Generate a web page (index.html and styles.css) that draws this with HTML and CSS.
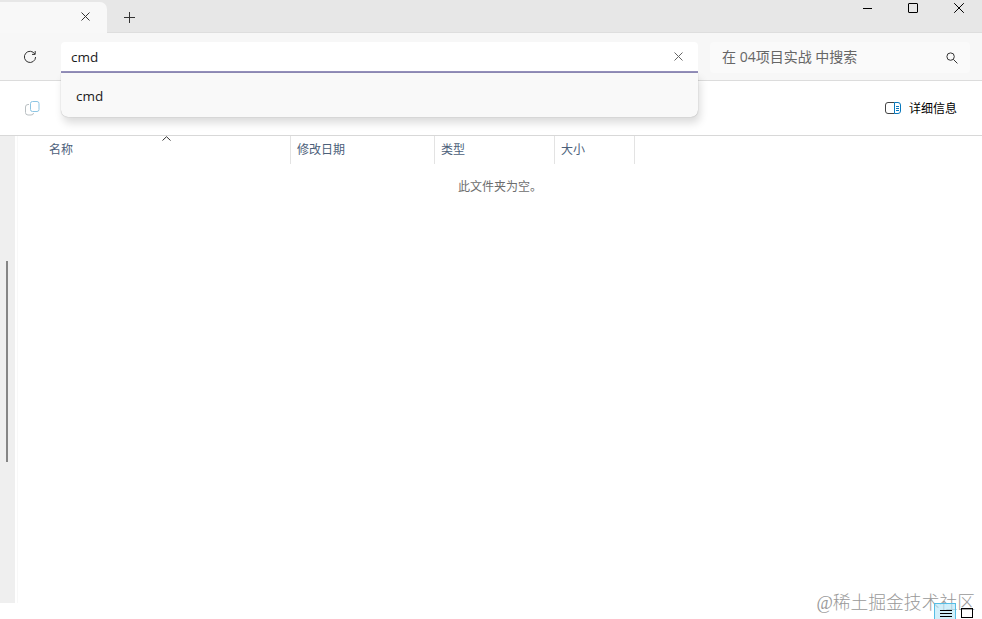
FILE: index.html
```html
<!DOCTYPE html>
<html lang="zh-CN">
<head>
    <meta charset="UTF-8">
    <meta name="viewport" content="width=device-width, initial-scale=1.0">
    <title>04项目实战</title>
    <link rel="stylesheet" href="styles.css">
</head>
<body>
    <div class="window">
        <header class="title-bar">
            <div class="tab">
                <svg class="tab-close" width="9" height="9" viewBox="0 0 9 9"><path d="M.5.5l8 8M8.5.5l-8 8"/></svg>
            </div>
            <svg class="new-tab" width="11" height="11" viewBox="0 0 11 11"><path d="M5.5 0v11M0 5.5h11"/></svg>
            <div class="window-controls">
                <svg width="10" height="10" viewBox="0 0 10 10"><path d="M1 5.5h9"/></svg>
                <svg width="10" height="10" viewBox="0 0 10 10"><rect x=".5" y=".5" width="9" height="9" rx=".5"/></svg>
                <svg width="10" height="10" viewBox="0 0 10 10"><path d="M.2.2l9.6 9.6M9.8.2L.2 9.8"/></svg>
            </div>
        </header>

        <div class="nav-bar">
            <svg class="refresh" width="14" height="14" viewBox="0 0 14 14"><path d="M11.8 4A5.6 5.6 0 1 0 12.6 7M12.2 1v3.4H9"/></svg>
            <div class="address">
                <span>cmd</span>
                <svg width="9" height="9" viewBox="0 0 9 9"><path d="M.5.5l8 8M8.5.5l-8 8"/></svg>
                <div class="suggestions">cmd</div>
            </div>
            <div class="search">
                <span>在 04项目实战 中搜索</span>
                <svg width="12" height="12" viewBox="0 0 12 12"><circle cx="4.6" cy="4.6" r="3.7"/><path d="M7.4 7.4l4 4"/></svg>
            </div>
        </div>

        <div class="command-bar">
            <svg class="copy" width="15" height="15" viewBox="0 0 15 15">
                <path class="copy-back" d="M4 3.5H3Q.5 3.5.5 6v5.5q0 2.5 2.5 2.5h3q2.5 0 2.5-2"/>
                <rect class="copy-front" x="5.5" y=".5" width="8.5" height="10" rx="2"/>
            </svg>
            <div class="details">
                <svg width="16" height="12" viewBox="0 0 16 12">
                    <path class="pane-left" d="M9.5.5H3Q.5.5.5 3v6q0 2.5 2.5 2.5h6.5"/>
                    <path class="pane-right" d="M9.5.5H13Q15.5.5 15.5 3v6q0 2.5-2.5 2.5H9.5zM11 4.5h3M11 6.5h3M11 8.5h3"/>
                </svg>
                <span>详细信息</span>
            </div>
        </div>

        <main class="content">
            <aside class="sidebar"><div class="scroll-thumb"></div></aside>
            <section class="files">
                <div class="columns">
                    <div class="column name">名称
                        <svg class="sort" width="9" height="5" viewBox="0 0 9 5"><path d="M.5 4.5l4-3.8 4 3.8"/></svg>
                    </div>
                    <div class="column date">修改日期</div>
                    <div class="column type">类型</div>
                    <div class="column size">大小</div>
                </div>
                <p class="empty">此文件夹为空。</p>
            </section>
        </main>

        <div class="watermark">@稀土掘金技术社区</div>
        <div class="view-switch">
            <div class="view active"><svg width="12" height="8" viewBox="0 0 12 8"><path d="M0 .5h12M0 3.5h12M0 6.5h12"/></svg></div>
            <div class="view"><svg width="12" height="10" viewBox="0 0 12 10"><rect x=".5" y=".5" width="11" height="9"/></svg></div>
        </div>
    </div>
</body>
</html>
```

FILE: styles.css
```css
* {
    box-sizing: border-box;
}

body {
    margin: 0;
    font-family: "Open Sans", "Noto Sans CJK SC", sans-serif;
    font-size: 12px;
    color: #1b1b1b;
    background: #fff;
}

svg {
    display: block;
    flex: none;
    fill: none;
    stroke: #333;
    stroke-width: 1;
}

.window {
    position: relative;
    display: flex;
    flex-direction: column;
    height: 619px;
    overflow: hidden;
}

.title-bar {
    display: flex;
    height: 33px;
    background: #e7e7e7;
    border-bottom: 1px solid #dedede;
}

.tab {
    display: flex;
    justify-content: flex-end;
    width: 107px;
    height: 31px;
    margin-top: 2px;
    padding: 10px 17px 0 0;
    background: #f8f8f8;
    border-radius: 0 7px 0 0;
}

.new-tab {
    margin: 12px 0 0 17px;
}

.window-controls {
    display: flex;
    gap: 36px;
    margin-left: auto;
    padding: 3px 18px 0 0;
}

.window-controls svg {
    stroke: #000;
}

.nav-bar {
    display: flex;
    align-items: flex-start;
    height: 48px;
    padding-top: 9px;
    background: #f7f7f7;
    border-bottom: 1px solid #dcdcdc;
}

.refresh {
    margin: 8px 0 0 23px;
}

.address {
    position: relative;
    display: flex;
    justify-content: space-between;
    align-items: center;
    width: 637px;
    height: 31px;
    margin-left: 24px;
    padding: 0 15px 0 10px;
    background: #fff;
    border-bottom: 2px solid #9490bb;
    border-radius: 4px 4px 0 0;
    font-size: 13.5px;
}

.address span {
    padding-top: 1px;
}

.address svg {
    stroke: #666;
}

.suggestions {
    position: absolute;
    top: 31px;
    left: 0;
    width: 637px;
    height: 44px;
    padding-left: 15px;
    line-height: 47px;
    background: #f9f9f9;
    border-radius: 0 0 7px 7px;
    box-shadow: 2px 6px 9px rgba(0, 0, 0, 0.14), 0 0 1px rgba(0, 0, 0, 0.35);
}

.search {
    display: flex;
    justify-content: space-between;
    align-items: center;
    width: 260px;
    height: 31px;
    margin-left: 12px;
    padding: 0 12px;
    background: #fafafa;
    border-radius: 4px;
    font-size: 14px;
    color: #666;
}

.search span {
    height: 31px;
    line-height: 29px;
}

.command-bar {
    display: flex;
    justify-content: space-between;
    align-items: center;
    height: 55px;
    padding: 0 25px;
    border-bottom: 1px solid #d8d8d8;
}

.copy-back {
    stroke: #b9bfc2;
}

.copy-front {
    stroke: #8cc5e3;
}

.details {
    display: flex;
    align-items: center;
    gap: 8px;
    color: #000;
}

.pane-left {
    stroke: #444;
}

.pane-right {
    stroke: #0878bd;
}

.content {
    display: flex;
    flex: 1;
}

.sidebar {
    width: 15px;
    height: 467px;
    padding: 125px 0 0 6px;
    background: #efefef;
}

.scroll-thumb {
    width: 2px;
    height: 201px;
    background: #858585;
}

.files {
    flex: 1;
    height: 467px;
    margin-left: 2px;
    border-left: 1px solid #f8f8f8;
}

.columns {
    display: flex;
    height: 28px;
}

.column {
    padding-left: 6px;
    border-right: 1px solid #e3e3e3;
    line-height: 27px;
    color: #4c607a;
}

.name {
    position: relative;
    width: 273px;
    padding-left: 31px;
}

.sort {
    position: absolute;
    top: 0;
    left: 144px;
}

.date {
    width: 144px;
}

.type {
    width: 120px;
}

.size {
    width: 80px;
}

.empty {
    margin: 14px 0 0;
    padding-left: 440px;
    line-height: 18px;
    color: #6d6d6d;
}

.watermark {
    position: absolute;
    right: 7px;
    bottom: 3px;
    font-family: "Liberation Serif", "Noto Sans CJK SC", serif;
    font-size: 17.8px;
    font-weight: 300;
    line-height: 26px;
    color: #999;
}

.view-switch {
    position: absolute;
    right: 9px;
    bottom: 0;
    display: flex;
    gap: 5px;
}

.view {
    padding-top: 5px;
}

.view svg {
    stroke: #000;
}

.active {
    width: 22px;
    height: 16px;
    padding: 6px 0 0 5px;
    background: rgba(185, 230, 248, 0.65);
    border: 1px solid #55bde5;
    border-bottom: 0;
}
```
